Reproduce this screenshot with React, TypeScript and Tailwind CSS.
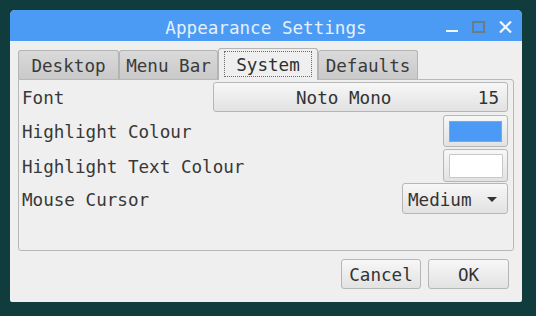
import React from 'react';

const mono = { fontFamily: '"DejaVu Sans Mono", "Liberation Mono", monospace' };

const tabs = ['Desktop', 'Menu Bar', 'System', 'Defaults'];

// DejaVu sits a bit high with leading-none, nudge glyphs down
function T({ children }: { children: React.ReactNode }) {
  return <span className="relative top-[2px]">{children}</span>;
}

function Tab({ label, active, width }: { label: string; active: boolean; width: number }) {
  if (active) {
    return (
      <div
        className="relative z-10 -mb-px flex h-[32px] items-center justify-center rounded-t-[3px] border border-b-0 border-[#b4b4b4] bg-[#efefef] px-[5px] pt-[2px] pb-[3px]"
        style={{ width }}
      >
        <div className="flex h-full w-full items-center justify-center border border-dotted border-[#6a6a6a] text-[#2e2e2e]">
          <T>{label}</T>
        </div>
      </div>
    );
  }
  return (
    <div
      className="flex h-[29px] items-center justify-center rounded-t-[3px] border border-b-0 border-[#b4b4b4] bg-gradient-to-b from-[#dadada] to-[#c9c9c9] text-[#3a3a3a]"
      style={{ width }}
    >
      <T>{label}</T>
    </div>
  );
}

function Button({ children, className = '' }: { children: React.ReactNode; className?: string }) {
  return (
    <div
      className={`flex items-center rounded-[3px] border border-[#b6b6b6] bg-gradient-to-b from-[#f7f7f7] to-[#e2e2e2] text-[#333] ${className}`}
    >
      {children}
    </div>
  );
}

export default function App() {
  const widths = [101, 99, 100, 100];
  return (
    <div className="h-[316px] w-[536px] overflow-hidden bg-[#113c3e] pt-[10px] pl-[10px]" style={mono}>
      <div className="flex h-[292px] w-[512px] flex-col overflow-hidden rounded-t-[5px] rounded-b-[2px] bg-[#efefef] text-[17.6px] leading-none">
        {/* title bar */}
        <div className="grid h-[31px] shrink-0 grid-cols-[1fr_auto_1fr] items-center bg-[#4b9bf5] pt-[2px]">
          <div />
          <div className="text-[#e6f0fb]">
            <T>Appearance Settings</T>
          </div>
          <div className="flex items-center justify-end gap-[14px] pr-[10px]">
            <svg width="12" height="12" viewBox="0 0 12 12">
              <rect x="0" y="9" width="12" height="2" fill="#f2f7fd" />
            </svg>
            <svg width="13" height="12" viewBox="0 0 13 12">
              <rect x="1" y="1" width="11" height="10" fill="none" stroke="#6c7b8b" strokeWidth="2" />
            </svg>
            <svg width="13" height="12" viewBox="0 0 13 12">
              <path d="M1 0.5 L12 11.5 M12 0.5 L1 11.5" stroke="#f2f7fd" strokeWidth="2.2" />
            </svg>
          </div>
        </div>

        {/* body */}
        <div className="flex flex-1 flex-col px-[8px] pt-[7px]">
          <div className="flex items-end">
            {tabs.map((t, i) => (
              <Tab key={t} label={t} active={t === 'System'} width={widths[i]} />
            ))}
          </div>
          <div className="flex h-[172px] flex-col rounded-[3px] rounded-tl-none border border-[#b8b8b8] bg-[#efefef] pr-[5px] pl-[3px] text-[#383838]">
            <div className="mt-[2px] flex h-[30px] items-center justify-between">
              <T>Font</T>
              <Button className="h-[30px] w-[295px] justify-between pr-[8px] pl-[82px]">
                <T>Noto Mono</T>
                <T>15</T>
              </Button>
            </div>
            <div className="mt-[3px] flex h-[32px] items-center justify-between">
              <T>Highlight Colour</T>
              <Button className="h-[32px] w-[65px] justify-center">
                <div className="h-[21px] w-[53px] border border-[#7aa7dc] bg-[#4b9bf6]" />
              </Button>
            </div>
            <div className="mt-[2px] flex h-[33px] items-center justify-between">
              <T>Highlight Text Colour</T>
              <Button className="h-[33px] w-[65px] justify-center">
                <div className="h-[24px] w-[54px] rounded-[1px] border border-[#c8c8c8] bg-white" />
              </Button>
            </div>
            <div className="mt-[1px] flex h-[31px] items-center justify-between">
              <T>Mouse Cursor</T>
              <Button className="h-[31px] w-[106px] justify-between pr-[10px] pl-[5px]">
                <T>Medium</T>
                <svg width="10" height="5" viewBox="0 0 10 5" className="relative top-[1px]">
                  <path d="M0 0 L10 0 L5 5 Z" fill="#333" />
                </svg>
              </Button>
            </div>
          </div>
          <div className="mt-[8px] flex justify-end gap-[7px] pr-[5px]">
            <Button className="h-[30px] w-[80px] justify-center">
              <T>Cancel</T>
            </Button>
            <Button className="h-[30px] w-[81px] justify-center">
              <T>OK</T>
            </Button>
          </div>
        </div>
      </div>
    </div>
  );
}
